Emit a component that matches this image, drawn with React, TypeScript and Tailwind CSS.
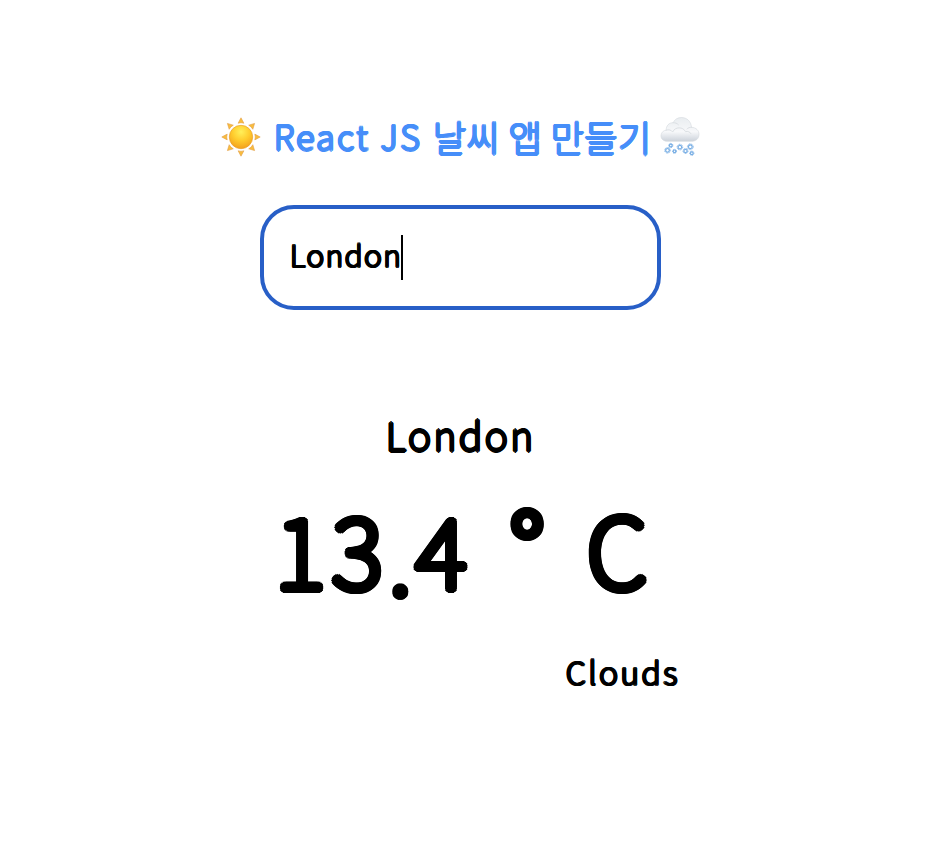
import React from "react";

// Thicken hairline glyphs evenly in every direction, giving marker-pen ends.
const FINE_PEN =
  "[text-shadow:var(--r)_0,calc(var(--r)*-1)_0,0_var(--r),0_calc(var(--r)*-1),calc(var(--r)*.707)_calc(var(--r)*.707),calc(var(--r)*-.707)_calc(var(--r)*.707),calc(var(--r)*.707)_calc(var(--r)*-.707),calc(var(--r)*-.707)_calc(var(--r)*-.707)]";
const BOLD_PEN =
  "[--r:4.2px] [text-shadow:var(--r)_0,calc(var(--r)*-1)_0,0_var(--r),0_calc(var(--r)*-1),calc(var(--r)*.707)_calc(var(--r)*.707),calc(var(--r)*-.707)_calc(var(--r)*.707),calc(var(--r)*.707)_calc(var(--r)*-.707),calc(var(--r)*-.707)_calc(var(--r)*-.707),calc(var(--r)*.924)_calc(var(--r)*.383),calc(var(--r)*.924)_calc(var(--r)*-.383),calc(var(--r)*-.924)_calc(var(--r)*.383),calc(var(--r)*-.924)_calc(var(--r)*-.383),calc(var(--r)*.383)_calc(var(--r)*.924),calc(var(--r)*.383)_calc(var(--r)*-.924),calc(var(--r)*-.383)_calc(var(--r)*.924),calc(var(--r)*-.383)_calc(var(--r)*-.924),calc(var(--r)*.5)_0,calc(var(--r)*-.5)_0,0_calc(var(--r)*.5),0_calc(var(--r)*-.5)]";

function SunIcon() {
  return (
    <svg viewBox="0 0 40 40" className="h-10 w-10 shrink-0" aria-hidden="true">
      <defs>
        <radialGradient id="sunFill" cx="50%" cy="28%" r="72%">
          <stop offset="0" stopColor="#fff05a" />
          <stop offset="0.5" stopColor="#ffcd2e" />
          <stop offset="1" stopColor="#f3a01c" />
        </radialGradient>
      </defs>
      {[0, 45, 90, 135, 180, 225, 270, 315].map((a) => (
        <path key={a} d="M20 .8 L22.9 6.2 Q20 5.2 17.1 6.2Z" fill="#f9bd3c" stroke="#e3a04a" strokeWidth=".6" strokeLinejoin="round" transform={`rotate(${a} 20 20)`} />
      ))}
      <circle cx="20" cy="20" r="11.7" fill="url(#sunFill)" stroke="#e59a27" strokeWidth=".6" />
    </svg>
  );
}

const flakes = [
  [10.8, 28.5, 2.1], [7.5, 33.3, 2.8], [14.5, 34.3, 2], [19.9, 30.1, 2.8],
  [25.5, 34, 2.5], [30.3, 29.8, 2.9], [31.8, 36.2, 2.1],
];

function SnowCloudIcon() {
  return (
    <svg viewBox="0 0 40 40" className="h-10 w-10 shrink-0" aria-hidden="true">
      <defs>
        <linearGradient id="cloudFill" x1="0" y1="0" x2="0" y2="1">
          <stop offset="0" stopColor="#e9edf0" />
          <stop offset="0.6" stopColor="#f7f8fa" />
          <stop offset="1" stopColor="#ccd2da" />
        </linearGradient>
      </defs>
      <g transform="translate(0 -1)">
        <path d="M7 25.3C3 25 .8 22.5 1 19.4c.2-3 2.5-5 5.2-5.2C6 10 9 6.5 13.1 6.7 14.7 3.3 17.8 1.5 21.5 1.5c5.5 0 9.5 4 10 9.8C36 11.5 39.1 14.5 39 18.5c-.1 4.2-3 6.7-7.5 6.8Z" fill="url(#cloudFill)" stroke="#d3d8dd" strokeWidth=".6" />
        <path d="M6.2 14.2c2.4-1 5-.3 6.5 1.8 2.2-5.5 10.5-5.5 12.8-.3 2.2-.8 4.5.1 5.5 2M13.1 6.7c2-.2 4 .6 5.3 2M27 13c1-1.2 2.6-1.8 4.500-1.700" fill="none" stroke="#dce0e4" strokeWidth="1" strokeLinecap="round" />
      </g>
      {flakes.map(([x, y, r]) => (
        <g key={x} transform={`translate(${x} ${y})`} fill="none" stroke="#79afe5">
          <circle r={r * 0.65} strokeWidth="1.2" />
          <circle r={r} strokeWidth="1" strokeDasharray="1 .7" />
        </g>
      ))}
    </svg>
  );
}

export default function App() {
  return (
    <main className="flex h-[846px] w-[936px] flex-col overflow-hidden bg-white pt-[112px] font-['Noto_Sans_CJK_KR','Noto_Sans',sans-serif] font-thin text-black">
      <h1 className={`ml-[221px] flex h-[50px] items-center whitespace-nowrap leading-[50px] text-[#468ef9] [--r:1.5px] ${FINE_PEN}`}>
        <SunIcon />
        <span className="ml-[13px] w-[159px] pb-[3px] text-[34px] tracking-[2.7px]">React JS</span>
        <span className="w-[227px] pb-[2px] text-[36px] tracking-[0.5px]">날씨 앱 만들기</span>
        <SnowCloudIcon />
      </h1>

      <div className="ml-[260px] mt-[43px] flex h-[105px] w-[401px] items-center rounded-[34px] border-4 border-[#285fc7] pl-[26px]">
        <span className={`w-[111px] pb-[7px] text-[30px] leading-[44px] tracking-[1.6px] [--r:1.3px] ${FINE_PEN}`}>London</span>
        <span className="h-[45px] w-[2px] bg-black" />
      </div>

      <section className="flex flex-col whitespace-nowrap">
        <h2 className={`ml-[386px] mt-[92px] h-[64px] text-[39px] leading-[64px] tracking-[2.7px] [--r:1.7px] ${FINE_PEN}`}>London</h2>
        <div className={`ml-[275px] mt-[6px] flex h-[151px] text-[97px] leading-[150px] ${BOLD_PEN}`}>
          <span className="flex w-[235px] tracking-[6.5px]">
            <span>13</span>
            <span className="translate-y-[6px]">.</span>
            <span className="-ml-[2px]">4</span>
          </span>
          <span className="w-[77px] -translate-y-[3px] text-[102px]">°</span>
          <span>C</span>
        </div>
        <p className={`ml-[566px] mt-[21px] h-[54px] text-[32px] leading-[54px] tracking-[2.6px] [--r:1.4px] ${FINE_PEN}`}>Clouds</p>
      </section>
    </main>
  );
}
